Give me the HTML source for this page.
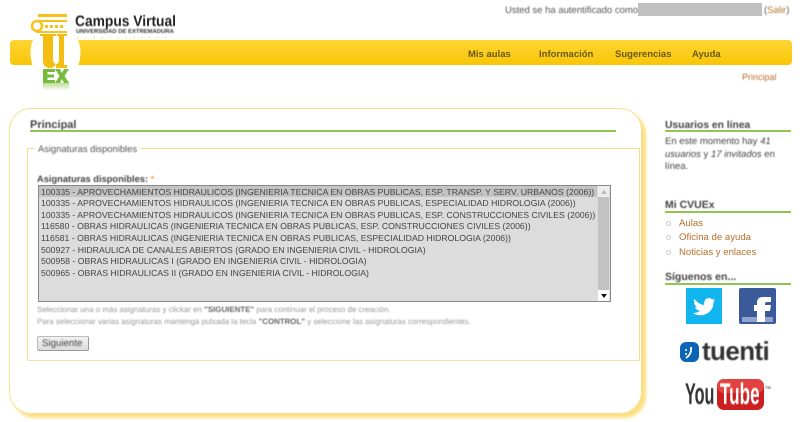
<!DOCTYPE html>
<html><head><meta charset="utf-8">
<style>
html,body{margin:0;padding:0;background:#fff}
#p{position:relative;width:800px;height:422px;overflow:hidden;background:#fff;font-family:"Liberation Sans",sans-serif;color:#555;text-rendering:geometricPrecision}
#p div,#p span.a,#p svg{position:absolute}
.t{white-space:nowrap;filter:blur(.4px)}
.g{height:2px;background:#8fc64f}
.h{font-weight:bold;color:#444;font-size:11px;line-height:13px}
.o{left:41px;font-size:8.7px;line-height:11px;color:#444;white-space:nowrap;filter:blur(.3px)}
.l{left:679px;font-size:9.6px;line-height:12px;color:#b5702c;white-space:nowrap;filter:blur(.3px)}
.c{left:666px;width:3px;height:3px;border:1px solid #ccc;border-radius:50%}
.m{top:48px;font-size:9.5px;line-height:13px;font-weight:bold;color:#6b5a12;white-space:nowrap;filter:blur(.3px)}
</style></head><body><div id="p">

<div class="t" style="left:505px;top:5px;font-size:9.5px;line-height:12px;color:#555">Usted se ha autentificado como</div>
<div style="left:638px;top:3px;width:124px;height:13px;background:#c0c0c0"></div>
<div class="t" style="left:764px;top:5px;font-size:9.5px;line-height:12px;color:#555">(<span style="color:#b5702c">Salir</span>)</div>

<div style="left:10px;top:40px;width:782px;height:25px;border-radius:4px;background:linear-gradient(#fdd535,#f9c505)"></div>

<svg style="left:0;top:0" width="200" height="100" viewBox="0 0 200 100">
  <defs><linearGradient id="r" x1="0" y1="0" x2="0" y2="1"><stop offset="0" stop-color="#bcdd9a"/><stop offset="1" stop-color="#fff"/></linearGradient></defs>
  <ellipse cx="55.500" cy="53" rx="25" ry="30" fill="#fff"/>
  <path d="M38 14H67V17H38Z" fill="#f7c21a"/>
  <circle cx="37" cy="26" r="5" fill="none" stroke="#f7c21a" stroke-width="2.500"/>
  <path d="M36 20H67V22H36ZM36 31H67V33H36Z" fill="#f7c21a"/>
  <path d="M45 25h3v3h-3zM50 25h3v3h-3zM55 25h3v3h-3zM60 25h3v3h-3z" fill="#f7c21a"/>
  <path d="M40 34H56V36H53V58Q53 64 56 64Q59 64 59 60V36H57V34H67V36H64V65H67V68H56V64Q54 68 50 68Q43 68 43 60V36H40Z" fill="#f5bd10"/>
  <path d="M43 69H55V72H47.500V74.500H54V77.500H47.500V80H55V83H43ZM55 69H60L62 73L64 69H69L64.500 76L69 83H64L62 79L60 83H55L59.500 76Z" fill="#79bc3b"/>
  <rect x="43" y="83" width="26" height="8" fill="url(#r)"/>
  <g fill="#d6e58a"><circle cx="78" cy="37.500" r=".7"/><circle cx="86" cy="37.500" r=".7"/><circle cx="94" cy="37.500" r=".7"/><circle cx="102" cy="37.500" r=".7"/><circle cx="110" cy="37.500" r=".7"/><circle cx="118" cy="37.500" r=".7"/><circle cx="126" cy="37.500" r=".7"/><circle cx="134" cy="37.500" r=".7"/><circle cx="142" cy="37.500" r=".7"/><circle cx="150" cy="37.500" r=".7"/><circle cx="158" cy="37.500" r=".7"/><circle cx="166" cy="37.500" r=".7"/></g>
</svg>
<div class="t" style="left:75px;top:13px;font-size:15px;line-height:18px;font-weight:bold;color:#222;transform-origin:0 0;transform:scaleX(.92)">Campus Virtual</div>
<div class="t" style="left:76px;top:28px;font-size:5.900px;line-height:8px;font-weight:bold;color:#333">UNIVERSIDAD DE EXTREMADURA</div>

<div class="m" style="left:468px">Mis aulas</div>
<div class="m" style="left:539px">Información</div>
<div class="m" style="left:615px">Sugerencias</div>
<div class="m" style="left:692px">Ayuda</div>
<div class="t" style="left:742px;top:71px;font-size:9px;line-height:12px;color:#b5702c">Principal</div>

<!-- main box -->
<div style="left:9px;top:108px;width:631px;height:304px;border:1px solid #f6e08f;border-radius:22px;box-shadow:4px 4px 3px rgba(252,215,95,.8);background:#fff"></div>

<div class="t h" style="left:30px;top:119px">Principal</div>
<div class="g" style="left:30px;top:130px;width:586px"></div>

<!-- fieldset -->
<div style="left:27px;top:148px;width:611px;height:211px;border:1px solid #f6e08f;border-bottom-color:#f2e3a6"></div>
<div class="t" style="left:35px;top:142px;padding:0 3px;background:#fff;font-size:9.4px;line-height:13px;color:#555">Asignaturas disponibles</div>

<div class="t" style="left:37px;top:173px;font-size:9.300px;line-height:12px;font-weight:bold;color:#444">Asignaturas disponibles: <span style="color:#f0b040">*</span></div>

<!-- select -->
<div style="left:38px;top:185px;width:571px;height:115px;background:#dcdcdc;border:1px solid #888"></div>
<div style="left:39px;top:186px;width:558px;height:11px;background:#c4c4c4"></div>
<div style="left:598px;top:186px;width:11px;height:115px;background:#c2c2c2"></div>
<div style="left:598px;top:186px;width:11px;height:11px;background:#eee"></div>
<div style="left:598px;top:290px;width:11px;height:11px;background:#fff"></div>
<div style="left:601px;top:190px;width:0;height:0;border:3px solid transparent;border-top:0;border-bottom:4px solid #bbb"></div>
<div style="left:600.500px;top:294px;width:0;height:0;border:3.500px solid transparent;border-bottom:0;border-top:4px solid #111"></div>

<div class="o" style="top:187px">100335 - APROVECHAMIENTOS HIDRAULICOS (INGENIERIA TECNICA EN OBRAS PUBLICAS, ESP. TRANSP. Y SERV. URBANOS (2006))</div>
<div class="o" style="top:198px">100335 - APROVECHAMIENTOS HIDRAULICOS (INGENIERIA TECNICA EN OBRAS PUBLICAS, ESPECIALIDAD HIDROLOGIA (2006))</div>
<div class="o" style="top:210px">100335 - APROVECHAMIENTOS HIDRAULICOS (INGENIERIA TECNICA EN OBRAS PUBLICAS, ESP. CONSTRUCCIONES CIVILES (2006))</div>
<div class="o" style="top:221px">116580 - OBRAS HIDRAULICAS (INGENIERIA TECNICA EN OBRAS PUBLICAS, ESP. CONSTRUCCIONES CIVILES (2006))</div>
<div class="o" style="top:233px">116581 - OBRAS HIDRAULICAS (INGENIERIA TECNICA EN OBRAS PUBLICAS, ESPECIALIDAD HIDROLOGIA (2006))</div>
<div class="o" style="top:245px">500927 - HIDRAULICA DE CANALES ABIERTOS (GRADO EN INGENIERIA CIVIL - HIDROLOGIA)</div>
<div class="o" style="top:256px">500958 - OBRAS HIDRAULICAS I (GRADO EN INGENIERIA CIVIL - HIDROLOGIA)</div>
<div class="o" style="top:268px">500965 - OBRAS HIDRAULICAS II (GRADO EN INGENIERIA CIVIL - HIDROLOGIA)</div>

<div class="t" style="left:37px;top:304px;font-size:7.900px;line-height:11px;color:#999">Seleccionar una o más asignaturas y clickar en <b style="color:#666">"SIGUIENTE"</b> para continuar el proceso de creación.</div>
<div class="t" style="left:37px;top:316px;font-size:7.900px;line-height:11px;color:#999">Para seleccionar varias asignaturas mantenga pulsada la tecla <b style="color:#666">"CONTROL"</b> y seleccione las asignaturas correspondientes.</div>

<div style="left:37px;top:336px;width:50px;height:13px;background:linear-gradient(#f2f2f2,#dcdcdc);border:1px solid #bbb;border-bottom-color:#999;border-right-color:#999;border-radius:2px"></div>
<div class="t" style="left:42px;top:337px;font-size:9.700px;line-height:13px;color:#444">Siguiente</div>

<!-- sidebar -->
<div class="t h" style="left:665px;top:119px;font-size:10.300px">Usuarios en línea</div>
<div class="g" style="left:665px;top:130px;width:126px"></div>
<div class="t" style="left:665px;top:136px;font-size:9.500px;line-height:12.500px;color:#444">En este momento hay <i>41</i><br><i>usuarios</i> y <i>17 invitados</i> en<br>línea.</div>

<div class="t h" style="left:665px;top:199px;font-size:10.500px">Mi CVUEx</div>
<div class="g" style="left:665px;top:211px;width:126px"></div>
<div class="c" style="top:221px"></div><div class="l" style="top:218px">Aulas</div>
<div class="c" style="top:235px"></div><div class="l" style="top:232px">Oficina de ayuda</div>
<div class="c" style="top:250px"></div><div class="l" style="top:247px">Noticias y enlaces</div>

<div class="t h" style="left:665px;top:271px;font-size:10.500px">Síguenos en...</div>
<div class="g" style="left:665px;top:283px;width:126px"></div>

<svg style="left:660px;top:270px" width="140" height="152" viewBox="660 270 140 152">
  <rect x="686" y="288" width="36" height="36" fill="#12b5ee"/>
  <path d="M694 299Q700 305 704 305Q704 298 709 298Q711 298 712 299.500L714.500 298.500L713 301L715 300.500L713.500 302.500Q713 311 706 314Q699 317 693 313Q697 313 700 311Q696 310 695 307H697Q694 305 694 302L696 303Q693 301 694 299Z" fill="#fff"/>
  <rect x="739" y="288" width="37" height="36" rx="2" fill="#3b5a9a"/>
  <rect x="742" y="317" width="31" height="5" fill="#8fa3cc"/>
  <path d="M757 322V311H754V305H757V303Q757 297 763 297H771V302H767Q765 302 765 304V305H771L770 311H765V322Z" fill="#fff"/>
  <rect x="680" y="342" width="19" height="20" rx="6" fill="#0c64b4"/>
  <path d="M691 347Q692 354 686 358" fill="none" stroke="#fff" stroke-width="1.800"/>
  <circle cx="686" cy="350" r="1" fill="#fff"/><circle cx="686" cy="354" r="1" fill="#fff"/>
</svg>
<div class="t" style="left:702px;top:336px;font-size:26px;line-height:30px;font-weight:bold;color:#333;letter-spacing:-.6px">tuenti</div>

<svg style="left:660px;top:370px" width="140" height="52" viewBox="660 370 140 52">
  <rect x="717" y="379" width="47" height="31" rx="7" fill="#cb1f20"/>
  <rect x="717" y="379" width="47" height="14" rx="7" fill="#e2413f"/>
</svg>
<div class="t" style="left:685px;top:379px;font-size:30px;line-height:32px;font-weight:bold;color:#333;transform-origin:0 0;transform:scaleX(.54)">You</div>
<div class="t" style="left:720px;top:379px;font-size:30px;line-height:32px;font-weight:bold;color:#fff;transform-origin:0 0;transform:scaleX(.57)">Tube</div>
<div class="t" style="left:765px;top:385px;font-size:4px;line-height:5px;font-weight:bold;color:#666">TM</div>

</div></body></html>
